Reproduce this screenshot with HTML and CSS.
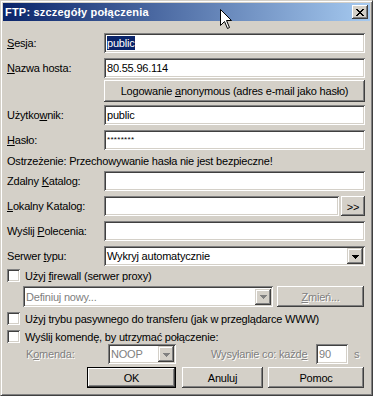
FILE: index.html
```html
<!DOCTYPE html>
<html lang="pl">

<head>
    <meta charset="UTF-8">
    <title>FTP: szczegóły połączenia</title>
    <link rel="stylesheet" href="styles.css">
</head>

<body>

    <div class="window">

        <!-- Title bar -->
        <div class="titlebar">
            <span class="title">FTP: szczegóły połączenia</span>
            <div class="close">
                <svg width="8" height="7" viewBox="0 0 8 7" shape-rendering="crispEdges">
                    <path d="M0 0h2v1h-2zM6 0h2v1h-2zM1 1h2v1h-2zM5 1h2v1h-2zM2 2h4v1h-4zM3 3h2v1h-2zM2 4h4v1h-4zM1 5h2v1h-2zM5 5h2v1h-2zM0 6h2v1h-2zM6 6h2v1h-2z" fill="#000"/>
                </svg>
            </div>
        </div>

        <!-- Form -->
        <div class="content">
            <div class="row first">
                <span class="lbl"><u>S</u>esja:</span>
                <div class="field"><span class="sel">public</span></div>
            </div>
            <div class="row">
                <span class="lbl"><u>N</u>azwa hosta:</span>
                <div class="field">80.55.96.114</div>
            </div>
            <div class="row tight">
                <span class="lbl"></span>
                <div class="btn wide"><span>Logowanie <u>a</u>nonymous (adres e-mail jako hasło)</span></div>
            </div>
            <div class="row after-btn">
                <span class="lbl">Użytko<u>w</u>nik:</span>
                <div class="field">public</div>
            </div>
            <div class="row">
                <span class="lbl"><u>H</u>asło:</span>
                <div class="field pass">********</div>
            </div>
            <div class="warning">Ostrzeżenie: Przechowywanie hasła nie jest bezpieczne!</div>
            <div class="row no-gap">
                <span class="lbl">Zdalny <u>K</u>atalog:</span>
                <div class="field"></div>
            </div>
            <div class="row">
                <span class="lbl"><u>L</u>okalny Katalog:</span>
                <div class="field"></div>
                <div class="btn browse">&gt;&gt;</div>
            </div>
            <div class="row">
                <span class="lbl">Wyślij <u>P</u>olecenia:</span>
                <div class="field"></div>
            </div>
            <div class="row">
                <span class="lbl">Serwer <u>t</u>ypu:</span>
                <div class="field combo">
                    <span class="combo-text">Wykryj automatycznie</span>
                    <div class="drop"><svg width="7" height="4" viewBox="0 0 7 4" shape-rendering="crispEdges"><path d="M0 0h7v1h-1v1h-1v1h-1v1h-1v-1h-1v-1h-1v-1h-1z" fill="#000"/></svg></div>
                </div>
            </div>

            <div class="check-row firewall">
                <div class="box"></div>
                <span>Użyj <u>f</u>irewall (serwer proxy)</span>
            </div>
            <div class="proxy-row">
                <div class="field combo proxy">
                    <span class="combo-text off">Definiuj nowy...</span>
                    <div class="drop"><svg width="7" height="4" viewBox="0 0 7 4" shape-rendering="crispEdges"><path d="M0 0h7v1h-1v1h-1v1h-1v1h-1v-1h-1v-1h-1v-1h-1z" fill="#808080"/></svg></div>
                </div>
                <div class="btn change"><span class="off"><u>Z</u>mień...</span></div>
            </div>
            <div class="check-row passive">
                <div class="box"></div>
                <span>Użyj trybu pasywnego do transferu (jak w przeglądarce WWW)</span>
            </div>
            <div class="check-row keep">
                <div class="box"></div>
                <span>Wyślij komendę, by utrzymać połączenie:</span>
            </div>
            <div class="keep-row">
                <span class="off cmd-lbl">K<u>o</u>menda:</span>
                <div class="field combo noop">
                    <span class="combo-text off">NOOP</span>
                    <div class="drop"><svg width="7" height="4" viewBox="0 0 7 4" shape-rendering="crispEdges"><path d="M0 0h7v1h-1v1h-1v1h-1v1h-1v-1h-1v-1h-1v-1h-1z" fill="#808080"/></svg></div>
                </div>
                <span class="off every">Wysyłanie co: każd<u>e</u></span>
                <div class="field secs"><span class="off">90</span></div>
                <span class="off unit">s</span>
            </div>

            <!-- Dialog buttons -->
            <div class="buttons">
                <div class="btn default ok">OK</div>
                <div class="btn cancel">Anuluj</div>
                <div class="btn help">Pomoc</div>
            </div>
        </div>

        <!-- Mouse pointer -->
        <svg class="cursor" width="13" height="21" viewBox="0 0 13 21">
            <path d="M0.5 0.5V16.5L4.5 12.5L7.5 19.5L9.5 18.5L6.5 11.5H11.5Z" fill="#fff" stroke="#000" stroke-width="1"/>
        </svg>
    </div>

</body>

</html>
```

FILE: styles.css
```css
body {
    margin: 0;
    background: #d4d0c8;
    font-family: "Liberation Sans", Arial, sans-serif;
    font-size: 11px;
    letter-spacing: -0.2px;
    color: #000;
}

u {
    text-decoration: underline;
    text-underline-offset: 1px;
}

.window {
    position: relative;
    width: 373px;
    height: 396px;
    box-sizing: border-box;
    background: #d4d0c8;
    border: 1px solid;
    border-color: #d4d0c8 #404040 #404040 #d4d0c8;
    box-shadow: inset 1px 1px #fff, inset -1px -1px #808080;
    padding: 2px;
    overflow: hidden;
}

.titlebar {
    height: 18px;
    display: flex;
    align-items: center;
    justify-content: space-between;
    background: linear-gradient(to right, #0a246a, #a6caf0);
    padding: 0 2px 0 2px;
}

.title {
    color: #fff;
    font-weight: bold;
    font-size: 11px;
    letter-spacing: 0.2px;
}

.close {
    width: 16px;
    height: 14px;
    box-sizing: border-box;
    background: #d4d0c8;
    box-shadow: inset -1px -1px #404040, inset 1px 1px #fff, inset -2px -2px #808080, inset 2px 2px #d4d0c8;
    display: flex;
    align-items: center;
    justify-content: center;
    padding-right: 1px;
}

.content {
    padding: 0 5px 0 4px;
}

.row {
    display: flex;
    align-items: center;
    margin-top: 5px;
}

.row.first {
    margin-top: 12px;
}

.row.tight {
    margin-top: 2px;
}

.row.after-btn {
    margin-top: 3px;
}

.row.no-gap {
    margin-top: 0;
}

.lbl {
    width: 97px;
    flex-shrink: 0;
}

.field {
    flex: 1;
    height: 20px;
    box-sizing: border-box;
    background: #fff;
    box-shadow: inset 1px 1px #808080, inset -1px -1px #fff, inset 2px 2px #404040, inset -2px -2px #d4d0c8;
    padding: 2px 2px 2px 3px;
    line-height: 16px;
    white-space: nowrap;
    overflow: hidden;
}

.sel {
    background: #0a246a;
    color: #fff;
    padding: 1px 0;
}

.pass {
    font-size: 8px;
    letter-spacing: 0.3px;
}

.btn {
    box-sizing: border-box;
    background: #d4d0c8;
    box-shadow: inset -1px -1px #404040, inset 1px 1px #fff, inset -2px -2px #808080, inset 2px 2px #d4d0c8;
    display: flex;
    align-items: center;
    justify-content: center;
    white-space: nowrap;
}

.btn.wide {
    flex: 1;
    height: 22px;
}

.btn.browse {
    width: 24px;
    height: 20px;
    margin-left: 2px;
    padding-top: 1px;
}

.warning {
    height: 21px;
    line-height: 22px;
}

.combo {
    display: flex;
    align-items: center;
    padding-right: 2px;
}

.combo-text {
    flex: 1;
}

.drop {
    width: 16px;
    height: 16px;
    box-sizing: border-box;
    background: #d4d0c8;
    box-shadow: inset -1px -1px #404040, inset 1px 1px #d4d0c8, inset -2px -2px #808080, inset 2px 2px #fff;
    display: flex;
    align-items: center;
    justify-content: center;
    padding-top: 1px;
}

.off {
    color: #808080;
    text-shadow: 1px 1px #fff;
}

.check-row {
    display: flex;
    align-items: center;
    height: 13px;
}

.check-row.firewall {
    margin-top: 3px;
}

.check-row.passive {
    margin-top: 5px;
}

.check-row.keep {
    margin-top: 5px;
}

.box {
    width: 13px;
    height: 13px;
    box-sizing: border-box;
    background: #fff;
    box-shadow: inset 1px 1px #808080, inset -1px -1px #fff, inset 2px 2px #404040, inset -2px -2px #d4d0c8;
    margin-right: 5px;
    flex-shrink: 0;
}

.proxy-row {
    display: flex;
    margin-top: 4px;
    margin-left: 16px;
    height: 21px;
}

.field.proxy {
    flex: none;
    width: 250px;
    height: 21px;
}

.btn.change {
    width: 87px;
    margin-left: 4px;
    height: 21px;
}

.keep-row {
    display: flex;
    align-items: center;
    margin-top: 1px;
    height: 20px;
}

.cmd-lbl {
    margin-left: 19px;
    width: 82px;
}

.field.noop {
    flex: none;
    width: 68px;
}

.every {
    margin-left: 35px;
    width: 105px;
}

.field.secs {
    flex: none;
    width: 32px;
}

.unit {
    margin-left: 6px;
}

.buttons {
    display: flex;
    margin-top: 3px;
    margin-left: 80px;
}

.buttons .btn {
    height: 21px;
}

.btn.default {
    border: 1px solid #000;
}

.btn.ok {
    width: 89px;
}

.btn.cancel {
    width: 81px;
    margin-left: 6px;
}

.btn.help {
    width: 96px;
    margin-left: 5px;
}

.cursor {
    position: absolute;
    left: 219px;
    top: 8px;
}
```
